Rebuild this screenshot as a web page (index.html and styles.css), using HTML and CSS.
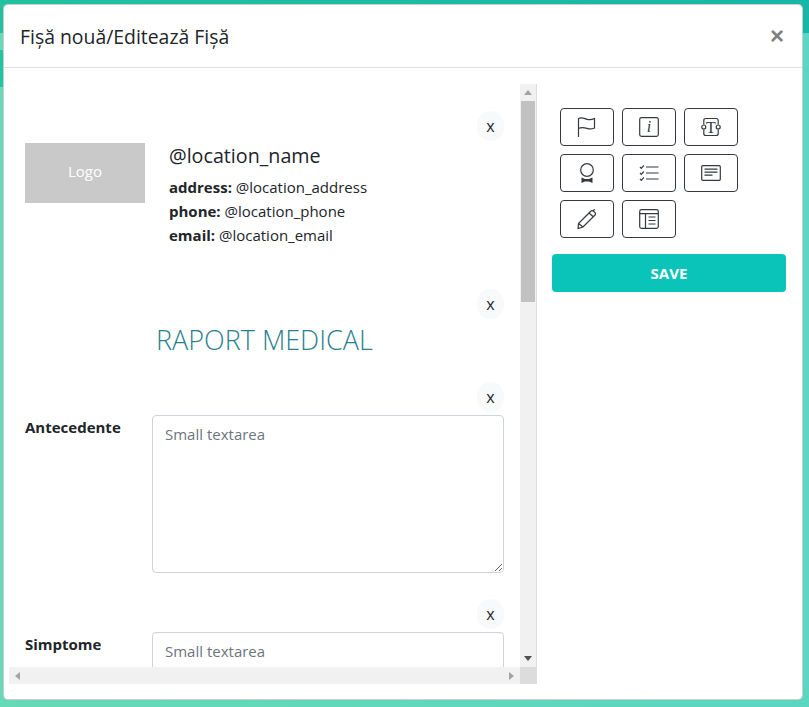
FILE: index.html
```html
<!DOCTYPE html>
<html lang="ro">
<head>
<meta charset="utf-8">
<title>Fișă nouă/Editează Fișă</title>
<link rel="stylesheet" href="styles.css">
</head>
<body>
<div class="modal">
  <header class="modal-header">
    <h5 class="modal-title">Fișă nouă/Editează Fișă</h5>
    <span class="close">×</span>
  </header>
  <div class="modal-body">
    <div class="sheet">
      <div class="viewport">
        <div class="remove-row first"><button class="remove">x</button></div>
        <div class="location">
          <div class="logo">Logo</div>
          <div class="location-info">
            <div class="location-name">@location_name</div>
            <div class="line"><b>address:</b> @location_address</div>
            <div class="line"><b>phone:</b> @location_phone</div>
            <div class="line"><b>email:</b> @location_email</div>
          </div>
        </div>
        <div class="remove-row second"><button class="remove">x</button></div>
        <h2 class="report-title">RAPORT MEDICAL</h2>
        <div class="remove-row third"><button class="remove">x</button></div>
        <div class="field"><label class="field-label">Antecedente</label><textarea class="area" placeholder="Small textarea"></textarea></div>
        <div class="remove-row"><button class="remove">x</button></div>
        <div class="field"><label class="field-label">Simptome</label><textarea class="area" placeholder="Small textarea"></textarea></div>
      </div>
      <div class="vbar">
        <span class="arrow arrow-up"></span>
        <span class="thumb"></span>
        <span class="arrow arrow-down"></span>
      </div>
      <div class="hbar">
        <span class="arrow arrow-left"></span>
        <span class="arrow arrow-right"></span>
      </div>
      <div class="corner"></div>
    </div>
    <aside class="tools">
      <div class="tool-grid">
        <button class="tool"><svg class="ico" viewBox="0 0 20 20"><path d="M1.500 20V1.500c3.500-1.500 5.500 0 8.500.8s5 .4 7.500-.8v9.500c-2.500 1.200-5 1.200-7.500.4s-5-1.500-8.500 0"/></svg></button>
        <button class="tool"><svg class="ico" viewBox="0 0 20 20"><rect x=".7" y=".7" width="18.600" height="18.600" rx="1.800"/><text class="glyph-i" x="10" y="15" text-anchor="middle">i</text></svg></button>
        <button class="tool"><svg class="ico" viewBox="0 0 20 20"><path d="M2.800 7.500V3.500q0-2 2-2h10.400q2 0 2 2v4M2.800 12.500v4q0 2 2 2h10.400q2 0 2-2v-4"/><circle cx="2.800" cy="10" r="2"/><circle cx="17.200" cy="10" r="2"/><text class="glyph-t" x="10" y="15.500" text-anchor="middle">T</text></svg></button>
        <button class="tool"><svg class="ico" viewBox="0 0 20 20"><circle cx="10" cy="7" r="6.300"/><path class="fill" d="M4.500 14.500l3.500 1.500h4l3.500-1.500V20l-3.500-1.500h-4L4.500 20z"/></svg></button>
        <button class="tool"><svg class="ico" viewBox="0 0 20 20"><path d="M7 4h12.500M7 10h12.500M7 16h12.500"/><path d="M1 4l1.300 1.300L4.800 2.500M1 10l1.300 1.300 2.500-2.800M1 16l1.300 1.300 2.500-2.800"/></svg></button>
        <button class="tool"><svg class="ico" viewBox="0 0 20 20"><rect x=".7" y="2.700" width="18.600" height="14.600" rx="1"/><path d="M3.500 6.200h13M3.500 9.200h13M3.500 12.200h8"/></svg></button>
        <button class="tool"><svg class="ico" viewBox="0 0 20 20"><path d="M1.500 14.500L13.500 2.500q1.500-1.500 3-.2l1.500 1.300q1 1.200 0 2.400L6 18l-5 1.500zM1.500 14.500L6 18M12 4l4.500 4M16 1.500l2-1"/></svg></button>
        <button class="tool"><svg class="ico" viewBox="0 0 20 20"><rect x=".7" y=".7" width="18.600" height="18.600" rx="1.800"/><path d="M.7 4.700h18.600M6.500 4.700v14.600M9.500 8h7M9.500 11.500h7M9.500 15h7"/></svg></button>
      </div>
      <button class="save">SAVE</button>
    </aside>
  </div>
</div>
</body>
</html>
```
FILE: styles.css
```css
* { box-sizing: border-box; }
html, body { height: 100%; margin: 0; overflow: hidden; }
body {
  padding: 4px 6px 7px 3px;
  font-family: "Open Sans", "Liberation Sans", sans-serif;
  color: #212529;
  background:
    linear-gradient(#21c5a0, #21c5a0) 0 50px / 4px 37px no-repeat,
    linear-gradient(90deg, #22c19f, #17b7a8) 0 0 / 100% 33px no-repeat,
    linear-gradient(90deg, #66d9b6, #5bd6c1);
}
.modal {
  width: 800px;
  height: 696px;
  display: flex;
  flex-direction: column;
  background: #fff;
  border: 1px solid rgba(0, 0, 0, .2);
  border-radius: 5px;
}
.modal-header {
  height: 63px;
  flex: none;
  display: flex;
  align-items: center;
  justify-content: space-between;
  padding: 0 18px 0 16px;
  border-bottom: 1px solid #dee2e6;
}
.modal-title {
  margin: 2px 0 0;
  font-size: 19.400px;
  font-weight: 500;
  line-height: 1.5;
}
.close {
  font-size: 24px;
  font-weight: 700;
  line-height: 1;
  color: #7f7f7f;
  font-family: "Liberation Sans", sans-serif;
}
.modal-body {
  flex: 1;
  min-height: 0;
  display: flex;
  padding: 16px 0 15px 5px;
}
.sheet {
  width: 528px;
  height: 600px;
  flex: none;
  display: grid;
  grid-template-columns: 511px 17px;
  grid-template-rows: 583px 17px;
}
.viewport { overflow: hidden; padding: 0 16px; }
.vbar {
  display: flex;
  flex-direction: column;
  align-items: center;
  background: #f1f1f1;
  border-right: 1px solid #dcdcdc;
}
.hbar {
  display: flex;
  justify-content: space-between;
  align-items: center;
  background: #f1f1f1;
}
.corner { background: #dcdcdc; }
.thumb { width: 14px; height: 201px; background: #c1c1c1; flex: none; }
.arrow { width: 0; height: 0; flex: none; border-style: solid; border-color: transparent; }
.arrow-up { margin: 6px 0 6px; border-width: 0 4px 5px; border-bottom-color: #a3a3a3; }
.arrow-down { margin-top: auto; margin-bottom: 6px; border-width: 5px 4px 0; border-top-color: #505050; }
.arrow-left { margin-left: 6px; border-width: 4px 5px 4px 0; border-right-color: #a3a3a3; }
.arrow-right { margin-right: 6px; border-width: 4px 0 4px 5px; border-left-color: #a3a3a3; }
.remove-row { display: flex; justify-content: flex-end; margin-top: 26px; }
.remove-row.first { margin-top: 27px; }
.remove-row.second { margin-top: 42px; }
.remove-row.third { margin-top: 24px; }
.remove {
  width: 27px;
  height: 30px;
  padding: 0;
  border: 0;
  border-radius: 14px;
  background: #f8f9fa;
  color: #212529;
  font: 16px/30px "Open Sans", sans-serif;
}
.location { display: flex; margin-top: 2px; }
.logo {
  width: 120px;
  height: 60px;
  flex: none;
  display: flex;
  align-items: center;
  justify-content: center;
  padding-bottom: 4px;
  background: #c9c9c9;
  color: #fff;
  font-size: 15px;
}
.location-info { margin-left: 24px; }
.location-name { font-size: 19.700px; line-height: 25px; margin-bottom: 7px; }
.line { font-size: 15px; line-height: 24px; }
.line b { font-weight: 700; }
.report-title {
  margin: 3px 0 0;
  padding-left: 131px;
  font-size: 27px;
  line-height: 36px;
  font-weight: 300;
  color: #2a7f8e;
}
.field { display: flex; margin-top: 3px; }
.field-label {
  width: 127px;
  flex: none;
  padding-top: 1px;
  font-size: 15px;
  font-weight: 700;
  line-height: 22px;
}
.area {
  flex: 1;
  height: 158px;
  padding: 7px 12px;
  border: 1px solid #ced4da;
  border-radius: 4px;
  font: 15px/22px "Open Sans", sans-serif;
  color: #495057;
  outline: 0;
}
.area::placeholder { color: #6c757d; opacity: 1; }
.tools { width: 234px; margin-left: 15px; flex: none; }
.tool-grid {
  display: grid;
  grid-template-columns: repeat(3, 54px);
  grid-auto-rows: 38px;
  gap: 8px;
  margin: 24px 0 16px 8px;
}
.tool {
  display: flex;
  align-items: center;
  justify-content: center;
  padding: 0;
  background: #fff;
  border: 1px solid #343a40;
  border-radius: 4px;
}
.ico {
  width: 20px;
  height: 20px;
  fill: none;
  stroke: #343a40;
  stroke-width: 1.200;
}
.fill { fill: #343a40; stroke: none; }
.glyph-i { font: italic 16px "Liberation Serif", serif; fill: #343a40; stroke: none; }
.glyph-t { font: 16px "Liberation Serif", serif; fill: #343a40; stroke: none; }
.save {
  display: block;
  width: 234px;
  height: 38px;
  padding: 0;
  border: 0;
  border-radius: 4px;
  background: #0ac4ba;
  color: #fff;
  font: 700 15px/38px "Open Sans", sans-serif;
}
```
